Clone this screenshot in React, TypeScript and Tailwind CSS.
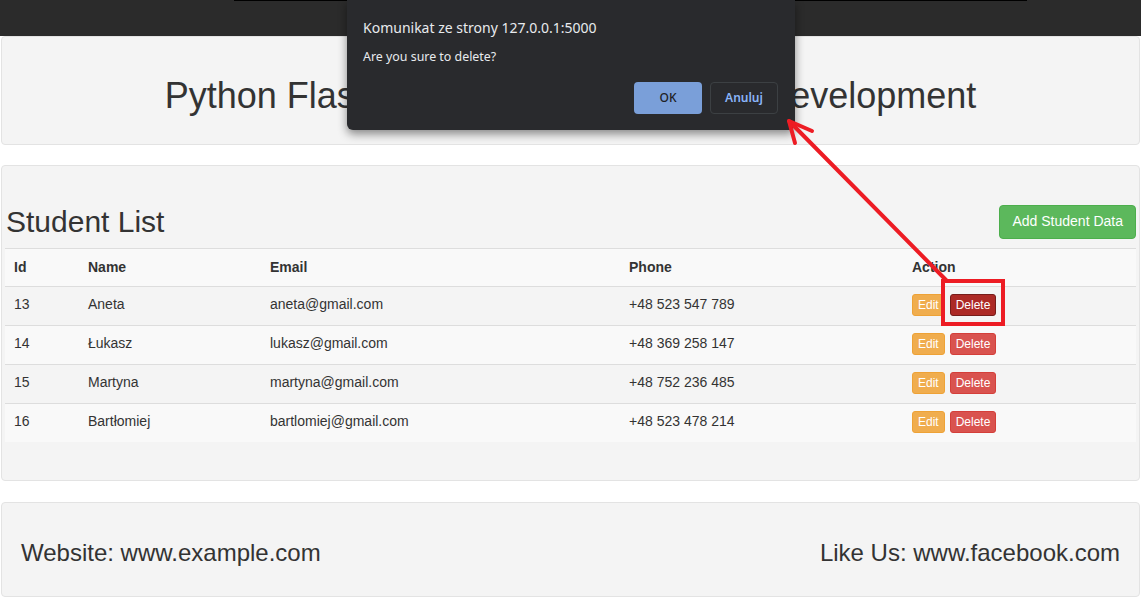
import React from "react";

interface Student {
  id: number;
  name: string;
  email: string;
  phone: string;
}

const students: Student[] = [
  { id: 13, name: "Aneta", email: "aneta@gmail.com", phone: "+48 523 547 789" },
  { id: 14, name: "Łukasz", email: "lukasz@gmail.com", phone: "+48 369 258 147" },
  { id: 15, name: "Martyna", email: "martyna@gmail.com", phone: "+48 752 236 485" },
  { id: 16, name: "Bartłomiej", email: "bartlomiej@gmail.com", phone: "+48 523 478 214" }
];

const cols = "grid grid-cols-[75px_182px_359px_283px_1fr]";

const StudentRow: React.FC<{ s: Student; index: number }> = ({ s, index }) => {
  return (
    <div className={`${cols} items-start h-[39px] border-t border-[#dddddd] leading-[20px] ${index % 2 === 0 ? "bg-[#f4f4f4]" : "bg-[#f9f9f9]"}`}>
      <div className="pl-[9px] pt-[7px]">{s.id}</div>
      <div className="pl-[8px] pt-[7px]">{s.name}</div>
      <div className="pl-[8px] pt-[7px]">{s.email}</div>
      <div className="pl-[8px] pt-[7px]">{s.phone}</div>
      <div className="pl-[8px] pt-[7px] flex gap-[5px]">
        <button className="h-[22px] px-[5px] text-[12px] leading-[18px] text-white bg-[#f0ad4e] border border-[#eea236] rounded-[3px]">
          Edit
        </button>
        <button
          className={`h-[22px] px-[5px] text-[12px] leading-[18px] text-white border rounded-[3px] ${
            index === 0 ? "bg-[#ac2925] border-[#761c19]" : "bg-[#d9534f] border-[#d43f3a]"
          }`}
        >
          Delete
        </button>
      </div>
    </div>
  );
};

const ConfirmDialog: React.FC = () => {
  return (
    <div className="absolute left-[347px] top-0 w-[448px] h-[130px] bg-[#292a2d] rounded-b-[6px] shadow-[0_4px_10px_rgba(0,0,0,0.45)] pl-[16px] pr-[17px] pt-[18px] font-['Noto_Sans',sans-serif]">
      <div className="text-[14px] leading-[20px] text-[#e8eaed]">Komunikat ze strony 127.0.0.1:5000</div>
      <div className="mt-[10px] text-[12.4px] leading-[18px] text-[#e8eaed]">Are you sure to delete?</div>
      <div className="mt-[16px] flex justify-end gap-[8px]">
        <button className="w-[68px] h-[32px] rounded-[4px] bg-[#7a9fd9] text-[12px] text-[#202124] font-medium">OK</button>
        <button className="w-[68px] h-[32px] rounded-[4px] border border-[#3c4043] text-[12px] text-[#8ab4f8] font-semibold">
          Anuluj
        </button>
      </div>
    </div>
  );
};

const Annotation: React.FC = () => {
  return (
    <>
      <div className="absolute left-[941px] top-[279px] w-[64px] h-[47px] border-[4px] border-[#ed1c24]" />
      <svg className="absolute left-0 top-0 pointer-events-none" width="1141" height="597">
        <g stroke="#ed1c24" strokeWidth="4" strokeLinecap="round" fill="none">
          <line x1="946" y1="280" x2="790" y2="122" />
          <line x1="789" y1="121" x2="812" y2="131" />
          <line x1="789" y1="121" x2="795" y2="143" />
        </g>
      </svg>
    </>
  );
};

const App: React.FC = () => {
  return (
    <div className="relative w-[1141px] h-[597px] overflow-hidden bg-white text-[#333333] font-['Liberation_Sans',Arial,sans-serif]">
      <div className="h-[36px] bg-[#2b2b2b]" />

      <div className="px-[1px]">
        <div className="border border-[#e3e3e3] rounded-[4px] bg-[#f4f4f4] pt-[39px] pb-[28px] text-center">
          <h1 className="text-[36px] leading-[40px]">Python Flask CRUD Web Application Development</h1>
        </div>

        <div className="mt-[20px] border border-[#e3e3e3] rounded-[4px] bg-[#f4f4f4] pt-[39px] pb-[38px] px-[3px]">
          <div className="flex items-center justify-between h-[33px]">
            <h2 className="text-[30px] leading-[33px] pl-[1px]">Student List</h2>
            <button className="h-[34px] px-[12px] text-[14px] text-white bg-[#5cb85c] border border-[#4cae4c] rounded-[4px]">
              Add Student Data
            </button>
          </div>

          <div className="mt-[10px] text-[14px]">
            <div className={`${cols} items-center h-[38px] border-t border-[#dddddd] bg-[#f9f9f9] font-bold`}>
              <div className="pl-[9px]">Id</div>
              <div className="pl-[8px]">Name</div>
              <div className="pl-[8px]">Email</div>
              <div className="pl-[8px]">Phone</div>
              <div className="pl-[8px]">Action</div>
            </div>
            {students.map((s, i) => (
              <StudentRow key={s.id} s={s} index={i} />
            ))}
          </div>
        </div>

        <div className="mt-[21px] border border-[#e3e3e3] rounded-[4px] bg-[#f4f4f4] pt-[37px] pb-[30px] px-[19px] flex justify-between text-[24px] leading-[26px]">
          <span>Website: www.example.com</span>
          <span>Like Us: www.facebook.com</span>
        </div>
      </div>

      <div className="absolute left-[234px] top-0 w-[793px] h-[1px] bg-black" />
      <ConfirmDialog />
      <Annotation />
    </div>
  );
};

export default App;
